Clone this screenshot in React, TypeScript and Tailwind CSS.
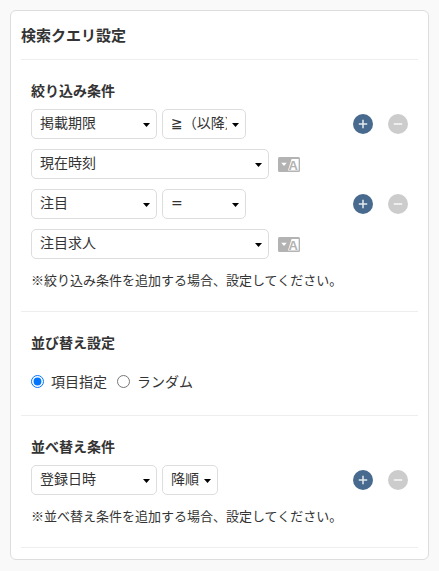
import React, { useState } from 'react';
import clsx from 'clsx';

interface SelectBoxProps {
  label: string;
  options: string[];
  className: string;
}

interface Filter {
  field: string;
  operator: string;
  value: string;
}

const filters: Filter[] = [
  { field: '掲載期限', operator: '≧（以降）', value: '現在時刻' },
  { field: '注目', operator: '=', value: '注目求人' },
];

const sortModes = [
  { value: 'field', label: '項目指定' },
  { value: 'random', label: 'ランダム' },
];

function SelectBox({ label, options, className }: SelectBoxProps) {
  return (
    <div className={clsx('relative', className)}>
      <select
        aria-label={label}
        className="block w-full h-[30px] appearance-none rounded-[5px] border border-[#ddd] bg-white pl-2 pr-[18px] pb-[2px] font-['DejaVu_Sans','Noto_Sans_CJK_JP',sans-serif] text-sm"
      >
        {options.map((option) => (
          <option key={option}>{option}</option>
        ))}
      </select>
      <svg
        viewBox="0 0 7 4"
        className="pointer-events-none absolute right-[7px] top-[14px] h-1 w-[7px]"
      >
        <path d="M0 0h7L3.5 4z" fill="#000" />
      </svg>
    </div>
  );
}

function RowButtons() {
  return (
    <div className="ml-auto flex gap-[15px]">
      <button type="button" aria-label="追加" className="h-5 w-5 rounded-full bg-[#486a8e]">
        <svg viewBox="0 0 20 20" className="h-5 w-5">
          <path d="M10 5.8v8.4M5.8 10h8.4" stroke="#e4eaf0" strokeWidth="1.5" />
        </svg>
      </button>
      <button type="button" aria-label="削除" className="h-5 w-5 rounded-full bg-[#ccc]">
        <svg viewBox="0 0 20 20" className="h-5 w-5">
          <path d="M5.8 10h8.4" stroke="#f2f2f2" strokeWidth="1.8" />
        </svg>
      </button>
    </div>
  );
}

function VariableButton() {
  return (
    <button type="button" aria-label="変数を選択">
      <svg viewBox="0 0 22 15" className="h-[15px] w-[22px]">
        <rect width="22" height="15" rx="1.5" fill="#b3b3b3" />
        <path d="M3.2 5.8h5.6L6 9z" fill="#fff" />
        <path d="M13.6 2H20.6V13.4H10z" fill="#fff" />
        <text
          x="15.3"
          y="12.6"
          textAnchor="middle"
          fill="#b3b3b3"
          fontSize="13"
          fontWeight="700"
          fontFamily="Liberation Sans, sans-serif"
        >
          A
        </text>
      </svg>
    </button>
  );
}

export default function App() {
  const [sortMode, setSortMode] = useState('field');

  return (
    <div className="min-h-screen bg-[#f9f9f9] p-[10px] font-['Noto_Sans_CJK_JP',sans-serif] text-sm text-[#333]">
      <div className="rounded-md border border-[#ddd] bg-white px-[10px] pb-[11px]">
        <h2 className="border-b border-[#eee] pt-[13px] pb-[13px] text-[15px] leading-[22px] font-bold">
          検索クエリ設定
        </h2>

        {/* Filters */}
        <section className="border-b border-[#eee] px-[10px] pt-[19px] pb-5">
          <h3 className="mb-2 leading-[22px] font-bold">絞り込み条件</h3>
          <div className="space-y-[10px]">
            {filters.map((filter) => (
              <React.Fragment key={filter.field}>
                <div className="flex items-center gap-[5px]">
                  <SelectBox label="項目" options={[filter.field]} className="w-[126px]" />
                  <SelectBox label="条件" options={[filter.operator]} className="w-[84px]" />
                  <RowButtons />
                </div>
                <div className="flex items-center gap-[9px]">
                  <SelectBox label="値" options={[filter.value]} className="w-[238px]" />
                  <VariableButton />
                </div>
              </React.Fragment>
            ))}
          </div>
          <p className="mt-[10px] text-[13px] leading-[22px]">
            ※絞り込み条件を追加する場合、設定してください。
          </p>
        </section>

        {/* Sort mode */}
        <section className="border-b border-[#eee] px-[10px] pt-[19px] pb-5">
          <h3 className="mb-4 leading-[22px] font-bold">並び替え設定</h3>
          <div className="flex gap-[10px] pb-[2px]">
            {sortModes.map((mode) => (
              <label key={mode.value} className="flex items-center gap-[7px] leading-6">
                <input
                  type="radio"
                  name="sortMode"
                  value={mode.value}
                  checked={sortMode === mode.value}
                  onChange={() => setSortMode(mode.value)}
                  className="h-[13px] w-[13px]"
                />
                {mode.label}
              </label>
            ))}
          </div>
        </section>

        {/* Sort conditions */}
        <section className="border-b border-[#eee] px-[10px] pt-[19px] pb-5">
          <h3 className="mb-2 leading-[22px] font-bold">並べ替え条件</h3>
          <div className="flex items-center gap-[5px]">
            <SelectBox label="並べ替え項目" options={['登録日時']} className="w-[126px]" />
            <SelectBox label="順序" options={['降順', '昇順']} className="w-14" />
            <RowButtons />
          </div>
          <p className="mt-[10px] text-[13px] leading-[22px]">
            ※並べ替え条件を追加する場合、設定してください。
          </p>
        </section>
      </div>
    </div>
  );
}
